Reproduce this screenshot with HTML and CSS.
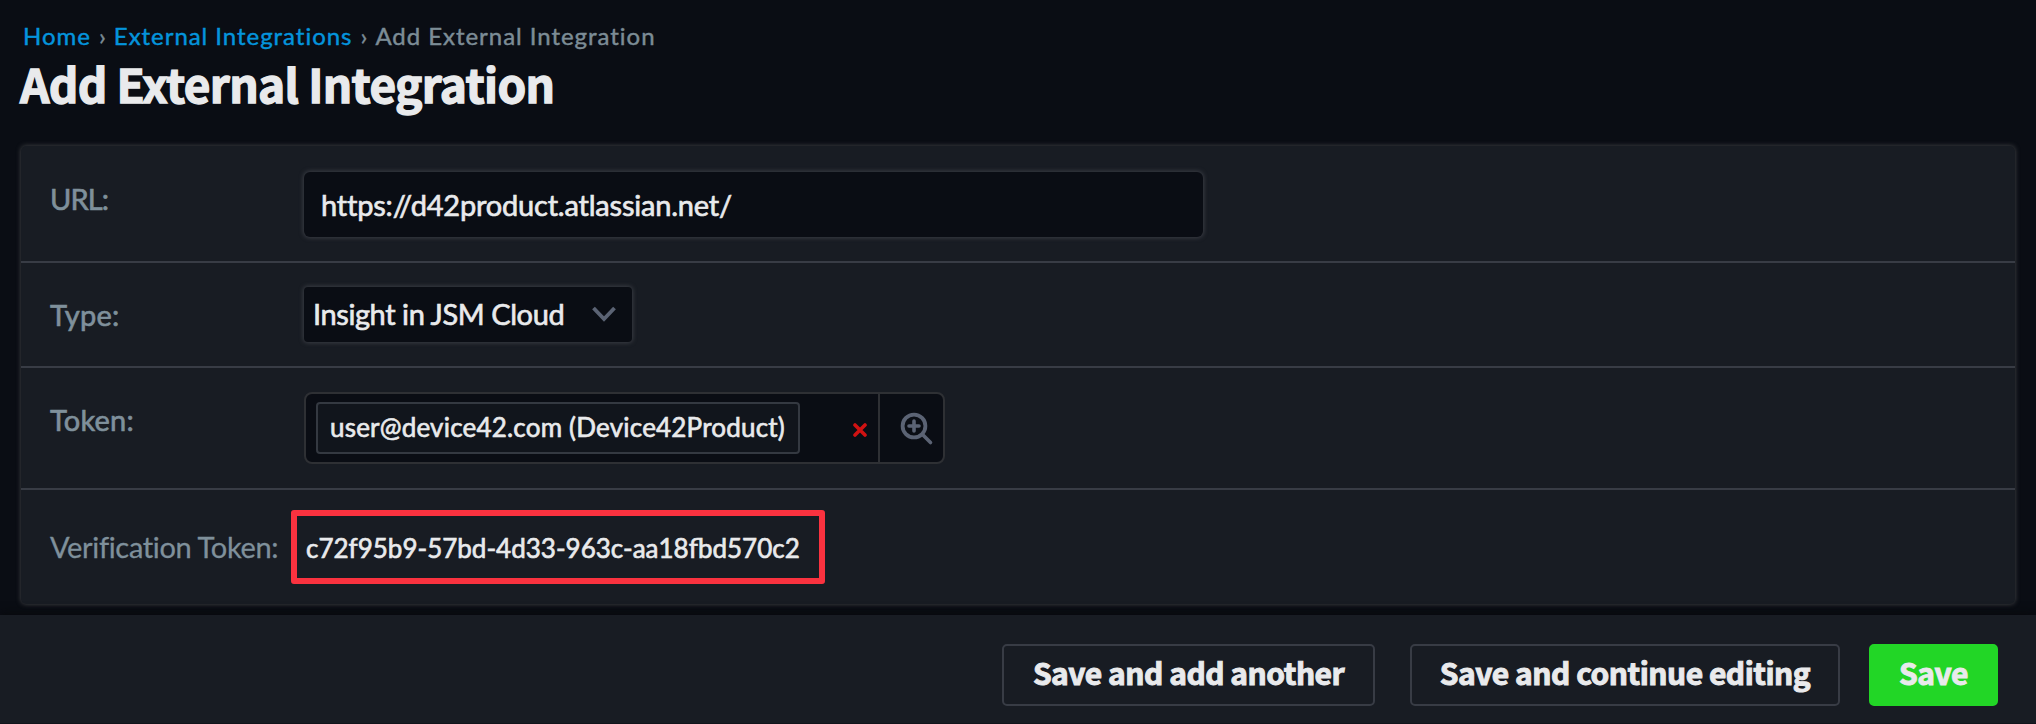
FILE: index.html
```
<!DOCTYPE html>
<html lang="en">
<head>
<meta charset="utf-8">
<title>Add External Integration</title>
<link rel="stylesheet" href="styles.css">
</head>
<body>
<header class="page-header">
  <nav class="breadcrumb"><a href="#">Home</a><span class="sep">›</span><a href="#">External Integrations</a><span class="sep">›</span><span>Add External Integration</span></nav>
  <h1 class="title">Add External Integration</h1>
</header>
<main class="panel">
  <div class="row row-url">
    <label class="label label-url" for="url">URL:</label>
    <input class="url-input" id="url" type="text" value="https://d42product.atlassian.net/">
  </div>
  <div class="row row-type">
    <span class="label label-type">Type:</span>
    <div class="select"><span>Insight in JSM Cloud</span>
      <svg class="chevron" width="24" height="16" viewBox="0 0 24 16"><path d="M1.5 2 L12 13 L22.5 2" fill="none" stroke="#5b6374" stroke-width="3.8"/></svg>
    </div>
  </div>
  <div class="row row-token">
    <span class="label label-token">Token:</span>
    <div class="picker">
      <div class="chip">user@device42.com (Device42Product)</div>
      <svg class="remove" width="14" height="14" viewBox="0 0 14 14"><path d="M2 2 L12 12 M12 2 L2 12" fill="none" stroke="#d01212" stroke-width="3.6" stroke-linecap="round"/></svg>
      <div class="lookup">
        <svg width="34" height="34" viewBox="0 0 34 34" fill="none" stroke="#5b6374" stroke-linecap="round"><circle cx="14" cy="14" r="11.4" stroke-width="3.8"/><path d="M14 9 V19 M9 14 H19 M22.5 22.5 L30.5 30.5" stroke-width="3.6"/></svg>
      </div>
    </div>
  </div>
  <div class="row row-verify">
    <span class="label label-verify">Verification Token:</span>
    <div class="verify-box">c72f95b9-57bd-4d33-963c-aa18fbd570c2</div>
  </div>
</main>
<footer class="actions">
  <button class="btn btn-another">Save and add another</button>
  <button class="btn btn-continue">Save and continue editing</button>
  <button class="btn btn-save">Save</button>
</footer>
</body>
</html>
```
FILE: styles.css
```
* { box-sizing: border-box; }
body {
  margin: 0;
  height: 724px;
  overflow: hidden;
  display: flex;
  flex-direction: column;
  background: #0a0d14;
  color: #e9eaec;
  font-family: Lato, "Open Sans", sans-serif;
  -webkit-text-stroke: 0.65px currentColor;
}
.page-header { height: 146px; flex: none; padding: 21px 0 0 20px; }
.breadcrumb {
  display: flex;
  height: 30px;
  padding-left: 3px;
  font-size: 24px;
  line-height: 30px;
  letter-spacing: 0.96px;
  color: #7c8c96;
  -webkit-text-stroke: 0.45px currentColor;
}
.breadcrumb a { color: #0494dc; text-decoration: none; }
.sep { width: 23px; text-align: center; letter-spacing: 0; }
.title {
  margin: 0;
  height: 64px;
  font: 700 46px/64px "Noto Sans CJK SC", sans-serif;
  letter-spacing: -0.65px;
  -webkit-text-stroke: 1.3px currentColor;
}
.panel {
  flex: none;
  width: 1994px;
  height: 458px;
  margin-left: 21px;
  border-radius: 5px;
  background: #181c23;
  box-shadow: 0 0 5px #47484b;
}
.row { display: flex; align-items: flex-start; padding-left: 29px; border-bottom: 2px solid #383c45; }
.row-url { height: 117px; padding-top: 26px; }
.row-type { height: 105px; padding-top: 24px; }
.row-token { height: 122px; padding-top: 24px; }
.row-verify { height: 114px; padding-top: 20px; border-bottom: 0; }
.label {
  flex: none;
  width: 254px;
  font-size: 29px;
  line-height: 36px;
  color: #7f909b;
}
.label-url { margin-top: 9px; letter-spacing: -0.9px; }
.label-type { margin-top: 10px; letter-spacing: 0.2px; }
.label-token { margin-top: 10px; letter-spacing: 0.2px; }
.label-verify { width: 241px; margin-top: 19px; letter-spacing: -0.34px; white-space: nowrap; -webkit-text-stroke-width: 0.3px; }
.url-input, .select {
  border: 0;
  outline: 0;
  background: #0a0d14;
  color: inherit;
  box-shadow: 0 0 4px 1px #3b3e45;
}
.url-input {
  width: 899px;
  height: 65px;
  padding: 0 0 1px 17px;
  border-radius: 6px;
  font: 29px Lato, sans-serif;
  letter-spacing: -0.2px;
  -webkit-text-stroke: 0.65px currentColor;
}
.select {
  display: flex;
  align-items: center;
  justify-content: space-between;
  width: 328px;
  height: 55px;
  padding: 0 16px 2px 9px;
  border-radius: 4px;
  font-size: 29px;
  letter-spacing: -0.42px;
}
.picker {
  display: flex;
  align-items: center;
  width: 641px;
  height: 72px;
  border: 2px solid #2e3034;
  border-radius: 8px;
  background: #0a0d14;
}
.chip {
  width: 484px;
  height: 52px;
  margin-left: 10px;
  padding-left: 12px;
  border: 2px solid #343941;
  border-radius: 4px;
  background: #11151c;
  font-size: 26px;
  line-height: 47px;
  letter-spacing: 0.2px;
  white-space: nowrap;
}
.remove { margin: 4px 11px 0 auto; }
.lookup {
  display: flex;
  width: 65px;
  height: 68px;
  padding: 18px 0 0 20px;
  border-left: 2px solid #2e3034;
}
.verify-box {
  width: 534px;
  height: 74px;
  padding-left: 9px;
  border: 6px solid #fa323f;
  border-radius: 3px;
  font-size: 26px;
  line-height: 64px;
  white-space: nowrap;
}
.actions {
  display: flex;
  flex: none;
  justify-content: flex-end;
  height: 109px;
  margin-top: 11px;
  padding: 29px 38px 0 0;
  background: #181c23;
  box-shadow: 0 -1px 9px #08090c;
  border-bottom: 1px solid #11141b;
}
.btn {
  height: 62px;
  padding: 0 0 7px;
  border: 2px solid #383c45;
  border-radius: 5px;
  background: #181c23;
  color: #e9eaec;
  font: 700 30px/40px "Noto Sans CJK SC", sans-serif;
  letter-spacing: -0.5px;
  -webkit-text-stroke: 1px currentColor;
}
.btn-another { width: 373px; margin-right: 35px; }
.btn-continue { width: 430px; margin-right: 29px; }
.btn-save { width: 129px; border-color: #22d626; background: #22d626; }
```
